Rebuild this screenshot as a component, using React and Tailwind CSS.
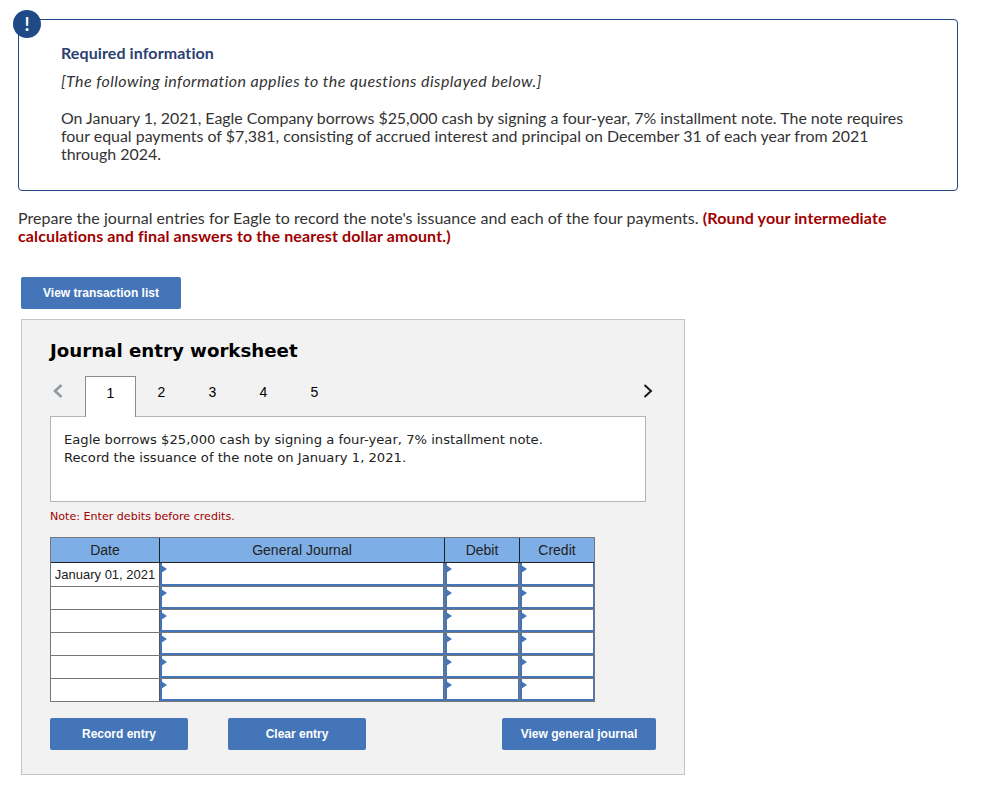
const rows = ['January 01, 2021', '', '', '', '', ''];

function InputCell({ className, last }) {
  return (
    <div className={`${className} ${last ? '' : 'border-r border-[#777]'}`}>
      <div className="relative h-full bg-white border-l-2 border-r border-b-2 border-[#4575b9]">
        <span className="absolute left-[-1px] top-[2px] w-0 h-0 border-y-[4px] border-y-transparent border-l-[6px] border-l-[#4575b9]" />
      </div>
    </div>
  );
}

function Btn({ children, className }) {
  return (
    <button className={`h-8 bg-[#4575b9] rounded-[2px] text-white text-xs font-bold font-['Liberation_Sans',sans-serif] ${className}`}>
      {children}
    </button>
  );
}

export default function App() {
  return (
    <div className="w-[1006px] h-[802px] bg-white pl-[18px] pt-[19px] text-[#333] text-base font-['Lato',sans-serif]">
      <div className="relative w-[940px] h-[172px] border border-[#1f4a85] rounded-[4px] pl-[42px] pt-[23px]">
        <div className="absolute left-[-6px] top-[-10px] w-7 h-7 rounded-full bg-[#1f4a85] text-white font-bold text-lg flex items-center justify-center">!</div>
        <div className="font-bold text-[#2b3f73] leading-5 tracking-[0.1px]">Required information</div>
        <div className="italic leading-[18px] mt-[9px] tracking-[0.42px]">[The following information applies to the questions displayed below.]</div>
        <p className="text-[15.93px] leading-[18px] mt-[19px] w-[850px]">
          On January 1, 2021, Eagle Company borrows $25,000 cash by signing a four-year, 7% installment note. The note requires four equal payments of $7,381, consisting of accrued interest and principal on December 31 of each year from 2021 through 2024.
        </p>
      </div>

      <p className="mt-[18px] w-[900px] leading-[18px] tracking-[0.03px]">
        Prepare the journal entries for Eagle to record the note's issuance and each of the four payments. <b className="text-[#a00000] tracking-[0.13px]">(Round your intermediate calculations and final answers to the nearest dollar amount.)</b>
      </p>

      <button className="block mt-8 ml-[3px] w-40 h-8 bg-[#4575b9] rounded-[2px] text-white text-xs font-bold font-['Liberation_Sans',sans-serif]">View transaction list</button>

      <div className="mt-[10px] ml-[3px] w-[664px] h-[456px] bg-[#f2f2f2] border border-[#c4c4c4] pl-[28px] pt-[19px]">
        <h2 className="text-[18.2px] leading-6 font-bold text-black font-['DejaVu_Sans',sans-serif]">Journal entry worksheet</h2>

        <div className="relative flex h-[41px] mt-[13px] pl-[35px] text-sm text-black font-['Liberation_Sans',sans-serif]">
          <svg className="absolute left-[3px] top-[8px]" width="10" height="14" viewBox="0 0 10 14" fill="none" stroke="#8f9aa5" strokeWidth="2.6">
            <path d="M8.5 1 L2 7 L8.5 13" />
          </svg>
          <div className="relative z-10 w-[51px] h-[41px] pb-2 bg-white border border-[#8c8c8c] border-b-0 flex items-center justify-center">1</div>
          {['2', '3', '4', '5'].map((n) => (
            <div key={n} className="w-[51px] h-[41px] pb-[10px] flex items-center justify-center">{n}</div>
          ))}
          <svg className="absolute left-[593px] top-[8px]" width="10" height="14" viewBox="0 0 10 14" fill="none" stroke="#1a1a1a" strokeWidth="2">
            <path d="M1.5 1 L8 7 L1.5 13" />
          </svg>
        </div>

        <div className="w-[596px] h-[86px] -mt-px bg-white border border-[#b5b5b5] pl-[13px] pt-[14px] text-[13.15px] leading-[18px] text-[#222] font-['DejaVu_Sans',sans-serif]">
          Eagle borrows $25,000 cash by signing a four-year, 7% installment note.<br />
          Record the issuance of the note on January 1, 2021.
        </div>

        <div className="mt-[7px] text-[11.1px] leading-4 text-[#a00000] font-['DejaVu_Sans',sans-serif]">Note: Enter debits before credits.</div>

        <div className="mt-3 w-[545px] border border-[#777] font-['Liberation_Sans',sans-serif] text-[13px] text-[#222]">
          <div className="flex h-[25px] bg-[#7eaee6] border-b border-[#222] text-sm">
            <div className="w-[109px] flex items-center justify-center border-r border-[#222]">Date</div>
            <div className="w-[285px] flex items-center justify-center border-r border-[#222]">General Journal</div>
            <div className="w-[75px] flex items-center justify-center border-r border-[#222]">Debit</div>
            <div className="w-[74px] flex items-center justify-center">Credit</div>
          </div>
          {rows.map((date, i) => (
            <div key={i} className={`flex ${i === 0 ? 'h-6' : i === 5 ? 'h-[22px]' : 'h-[23px]'} ${i < 5 ? 'border-b border-[#777]' : ''}`}>
              <div className="w-[109px] bg-white flex items-center justify-center border-r border-[#555]">{date}</div>
              <InputCell className="w-[285px]" />
              <InputCell className="w-[75px]" />
              <InputCell className="w-[74px]" last />
            </div>
          ))}
        </div>

        <div className="flex mt-4">
          <Btn className="w-[138px]">Record entry</Btn>
          <Btn className="w-[138px] ml-10">Clear entry</Btn>
          <Btn className="w-[154px] ml-[136px]">View general journal</Btn>
        </div>
      </div>
    </div>
  );
}
